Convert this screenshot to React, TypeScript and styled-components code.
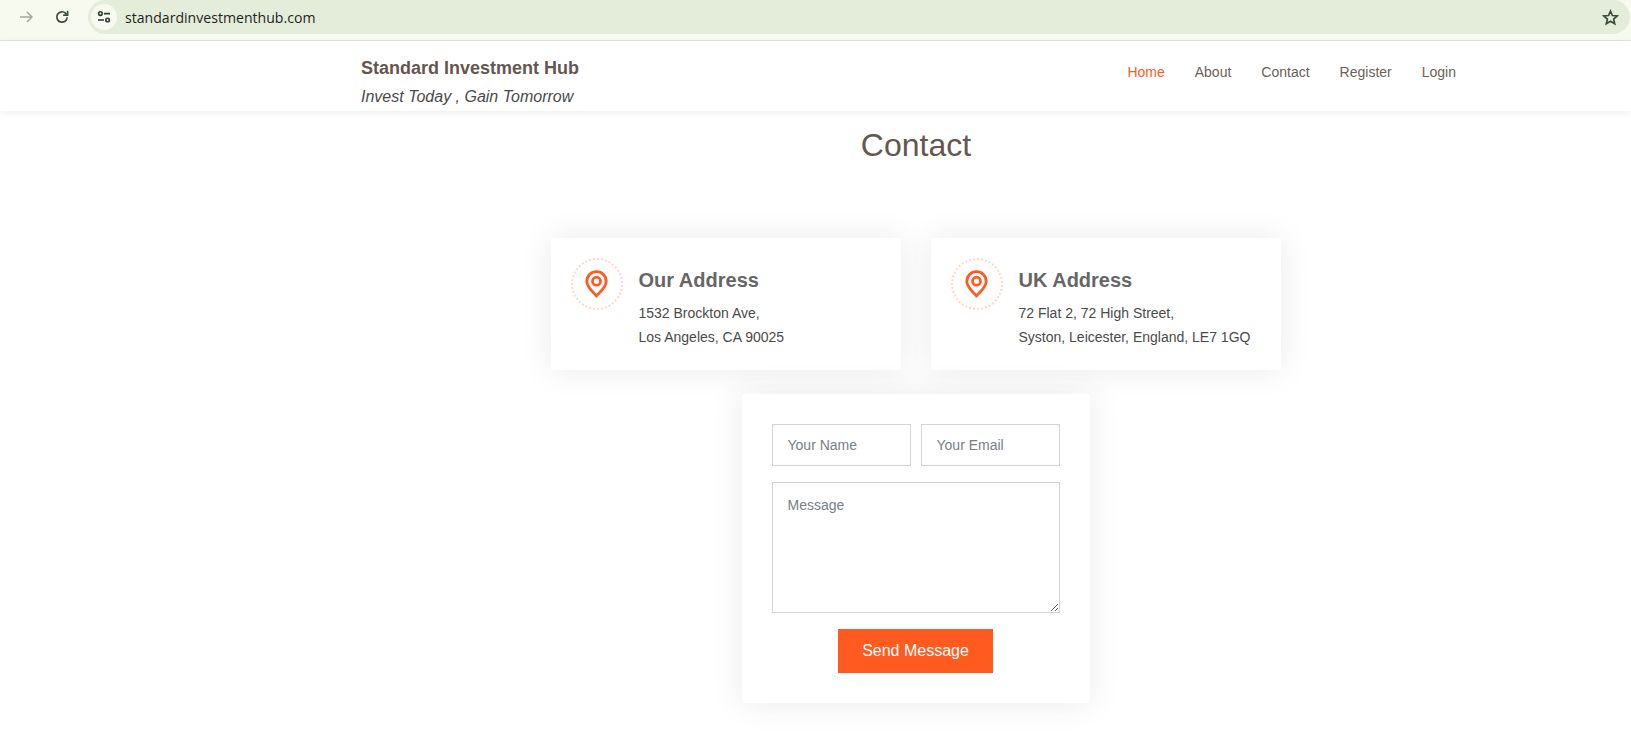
import React from "react";
import styled, { createGlobalStyle } from "styled-components";

const GlobalStyle = createGlobalStyle`
  html, body {
    margin: 0;
    padding: 0;
    background: #fff;
    font-family: "Liberation Sans", Arial, sans-serif;
  }
  * { box-sizing: border-box; }
`;

const Page = styled.div`
  width: 1631px;
  height: 744px;
  overflow: hidden;
  background: #fff;
`;

const BrowserBar = styled.div`
  height: 41px;
  background: #f6faef;
  border-bottom: 1px solid #e2e8d9;
  display: flex;
  align-items: flex-start;
  padding-right: 1px;
`;

const NavButtons = styled.div`
  width: 88px;
  height: 34px;
  display: flex;
  align-items: center;
  gap: 20px;
  padding-left: 18px;
`;

const UrlBar = styled.div`
  flex: 1;
  height: 34px;
  background: #e4edda;
  border-radius: 17px;
  display: flex;
  align-items: center;
  padding: 0 11px 0 3px;
`;

const TuneBadge = styled.div`
  width: 26px;
  height: 26px;
  border-radius: 50%;
  background: #f6faef;
  display: flex;
  align-items: center;
  justify-content: center;
`;

const UrlText = styled.span`
  margin-left: 8px;
  flex: 1;
  font-family: "Open Sans", "Noto Sans", sans-serif;
  font-size: 14.1px;
  color: #1f1f1f;
`;

const Header = styled.header`
  height: 70px;
  background: #fff;
  box-shadow: 0 2px 8px rgba(0, 0, 0, 0.07);
  padding-left: 361px;
  padding-right: 175px;
  display: flex;
  justify-content: space-between;
  position: relative;
`;

const Brand = styled.div`
  padding-top: 17px;
`;

const BrandName = styled.div`
  font-size: 18px;
  line-height: 21px;
  font-weight: 700;
  color: #655650;
`;

const Tagline = styled.div`
  margin-top: 8px;
  font-size: 16px;
  line-height: 20px;
  font-style: italic;
  color: #4a4a4a;
`;

const NavList = styled.nav`
  display: flex;
  gap: 30px;
  padding-top: 23px;
`;

const NavLink = styled.a<{ $active?: boolean }>`
  font-size: 14px;
  line-height: 16px;
  color: ${(p) => (p.$active ? "#ff5a20" : "#6b5f59")};
`;

const Main = styled.main`
  padding-left: 201px;
  display: flex;
  flex-direction: column;
  align-items: center;
`;

const Title = styled.h1`
  margin: 16px 0 0;
  font-size: 32px;
  line-height: 37px;
  font-weight: 400;
  color: #655650;
`;

const CardRow = styled.div`
  margin-top: 74px;
  display: flex;
  gap: 30px;
`;

const Card = styled.div`
  width: 350px;
  height: 132px;
  background: #fff;
  box-shadow: 0 0 29px rgba(60, 60, 60, 0.1);
  padding: 20px;
  display: flex;
  gap: 15.5px;
`;

const IconRing = styled.div`
  width: 52px;
  height: 52px;
  flex: none;
  border-radius: 50%;
  border: 2px dotted #ffd5c6;
  padding-right: 1px;
  display: flex;
  align-items: center;
  justify-content: center;
`;

const CardBody = styled.div`
  padding-top: 11px;
`;

const CardTitle = styled.h3`
  margin: 0;
  font-size: 20px;
  line-height: 23px;
  font-weight: 700;
  color: #666;
`;

const CardLine = styled.p`
  margin: 0;
  font-size: 14px;
  line-height: 24px;
  color: #4a4a4a;
  &:first-of-type {
    margin-top: 9px;
  }
`;

const FormCard = styled.form`
  margin-top: 24px;
  width: 348px;
  height: 309px;
  background: #fff;
  box-shadow: 0 0 30px rgba(60, 60, 60, 0.1);
  padding: 30px;
  display: flex;
  flex-direction: column;
`;

const FieldRow = styled.div`
  display: flex;
  gap: 10px;
`;

const TextInput = styled.input`
  width: 139px;
  height: 42px;
  border: 1px solid #ced4da;
  border-radius: 0;
  padding: 0 14.5px;
  font-family: inherit;
  font-size: 14px;
  outline: none;
  &::placeholder {
    color: #777e85;
    opacity: 1;
  }
`;

const MessageArea = styled.textarea`
  margin-top: 16px;
  width: 288px;
  height: 131px;
  border: 1px solid #ced4da;
  border-radius: 0;
  padding: 14px 14.5px;
  font-family: inherit;
  font-size: 14px;
  line-height: 16px;
  outline: none;
  display: block;
  &::placeholder {
    color: #777e85;
    opacity: 1;
  }
`;

const SubmitRow = styled.div`
  margin-top: 16px;
  padding-right: 1px;
  display: flex;
  justify-content: center;
`;

const SendButton = styled.button`
  width: 155px;
  height: 44px;
  border: 0;
  background: #ff5a20;
  color: #fff;
  font-family: inherit;
  font-size: 16px;
`;

const PinIcon = () => (
  <svg width="23" height="28" viewBox="0 0 23 28" fill="none" stroke="#ff5a20" strokeWidth="2.8" strokeLinejoin="round">
    <path d="M11.5 26 C9.5 23.2 1.8 17.4 1.8 11.4 C1.8 5.8 6 1.6 11.5 1.6 C17 1.6 21.2 5.8 21.2 11.4 C21.2 17.4 13.5 23.2 11.5 26 Z" />
    <circle cx="11.5" cy="11.2" r="4" />
  </svg>
);

const addresses = [
  { title: "Our Address", lines: ["1532 Brockton Ave,", "Los Angeles, CA 90025"] },
  { title: "UK Address", lines: ["72 Flat 2, 72 High Street,", "Syston, Leicester, England, LE7 1GQ"] },
];

export default function App() {
  return (
    <Page>
      <GlobalStyle />
      <BrowserBar>
        <NavButtons>
          <svg width="16" height="16" viewBox="0 0 16 16" fill="none" stroke="#a3a89f" strokeWidth="1.5">
            <path d="M2 8h12M9 3l5 5-5 5" />
          </svg>
          <svg width="16" height="16" viewBox="0 0 16 16" fill="none" stroke="#3c4a3c" strokeWidth="1.7">
            <path d="M13.2 8.2a5.2 5.2 0 1 1-1.5-3.9L13.4 6" />
            <path d="M13.6 1.8V6.2H9.2" />
          </svg>
        </NavButtons>
        <UrlBar>
          <TuneBadge>
            <svg width="14" height="14" viewBox="0 0 14 14" fill="none" stroke="#2f3a2f" strokeWidth="1.6">
              <circle cx="3.4" cy="3.6" r="1.8" />
              <path d="M7 3.6h6M1 10h6" />
              <circle cx="10.6" cy="10" r="1.8" />
            </svg>
          </TuneBadge>
          <UrlText>standardinvestmenthub.com</UrlText>
          <svg width="17" height="17" viewBox="0 0 24 24" fill="none" stroke="#3c4a3c" strokeWidth="2.4" strokeLinejoin="miter">
            <path d="M12 3l2.7 6.2 6.8.6-5.1 4.5 1.5 6.6L12 17.4l-5.9 3.5 1.5-6.6-5.1-4.5 6.8-.6z" />
          </svg>
        </UrlBar>
      </BrowserBar>

      <Header>
        <Brand>
          <BrandName>Standard Investment Hub</BrandName>
          <Tagline>Invest Today , Gain Tomorrow</Tagline>
        </Brand>
        <NavList>
          <NavLink $active>Home</NavLink>
          <NavLink>About</NavLink>
          <NavLink>Contact</NavLink>
          <NavLink>Register</NavLink>
          <NavLink>Login</NavLink>
        </NavList>
      </Header>

      <Main>
        <Title>Contact</Title>
        <CardRow>
          {addresses.map((a) => (
            <Card key={a.title}>
              <IconRing>
                <PinIcon />
              </IconRing>
              <CardBody>
                <CardTitle>{a.title}</CardTitle>
                {a.lines.map((l) => (
                  <CardLine key={l}>{l}</CardLine>
                ))}
              </CardBody>
            </Card>
          ))}
        </CardRow>
        <FormCard>
          <FieldRow>
            <TextInput placeholder="Your Name" />
            <TextInput placeholder="Your Email" />
          </FieldRow>
          <MessageArea placeholder="Message" />
          <SubmitRow>
            <SendButton type="button">Send Message</SendButton>
          </SubmitRow>
        </FormCard>
      </Main>
    </Page>
  );
}
